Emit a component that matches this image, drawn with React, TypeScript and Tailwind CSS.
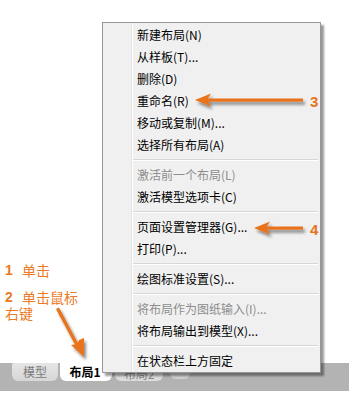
const font = { fontFamily: '"Noto Sans CJK SC", "Liberation Sans", sans-serif' };

type Row = { label: string; disabled?: boolean } | "sep";

const rows: Row[] = [
  { label: "新建布局(N)" },
  { label: "从样板(T)..." },
  { label: "删除(D)" },
  { label: "重命名(R)" },
  { label: "移动或复制(M)..." },
  { label: "选择所有布局(A)" },
  "sep",
  { label: "激活前一个布局(L)", disabled: true },
  { label: "激活模型选项卡(C)" },
  "sep",
  { label: "页面设置管理器(G)..." },
  { label: "打印(P)..." },
  "sep",
  { label: "绘图标准设置(S)..." },
  "sep",
  { label: "将布局作为图纸输入(I)...", disabled: true },
  { label: "将布局输出到模型(X)..." },
  "sep",
  { label: "在状态栏上方固定" },
];

function ContextMenu() {
  return (
    <div className="absolute left-[102px] top-[22px] w-[219px] border border-[#979797] bg-[#f0f0f0] pt-[1px] shadow-[3px_3px_2px_rgba(0,0,0,0.4)]">
      <div className="ml-[28px] border-l border-[#e2e3e3] shadow-[inset_1px_0_0_#ffffff]">
        {rows.map((r, i) =>
          r === "sep" ? (
            <div key={i} className="flex h-[8px] items-center pl-[1px] pr-[2px]">
              <div className="w-full border-t border-b border-t-[#d7d7d7] border-b-white" />
            </div>
          ) : (
            <div
              key={i}
              className={`flex h-[22px] items-center pl-[5px] text-[12px] ${r.disabled ? "text-[#8d8d8d]" : "text-black"}`}
            >
              {r.label}
            </div>
          )
        )}
      </div>
    </div>
  );
}

function Arrows() {
  return (
    <svg className="pointer-events-none absolute left-0 top-0" width="349" height="404" viewBox="0 0 349 404">
      <defs>
        <filter id="sh" x="-20%" y="-50%" width="140%" height="200%">
          <feDropShadow dx="2" dy="3" stdDeviation="1.5" floodColor="#000" floodOpacity="0.45" />
        </filter>
      </defs>
      <g fill="#e8731a" stroke="none" filter="url(#sh)">
        {/* arrow 3 */}
        <rect x="206" y="98.5" width="97" height="3.2" />
        <polygon points="195,100 211,93.5 207,100 211,106.5" />
        {/* arrow 4 */}
        <rect x="265" y="226.5" width="38" height="3.2" />
        <polygon points="254,228 270,221.5 266,228 270,234.5" />
        {/* diagonal arrow */}
        <polygon points="56,309 59,307.5 79,345 76,346.5" />
        <polygon points="84,357 71,345 77,344 79,340 84,338" />
      </g>
    </svg>
  );
}

export default function App() {
  return (
    <div className="relative h-[404px] w-[349px] overflow-hidden bg-white" style={font}>
      {/* annotations */}
      <div className="absolute left-[5px] top-[262px] text-[14px] leading-[16px] text-[#ea7a25]">
        <div className="flex items-center">
          <span className="w-[17px] font-bold" style={{ fontFamily: '"Liberation Sans", sans-serif' }}>1</span>
          <span>单击</span>
        </div>
        <div className="mt-[11px] flex items-center">
          <span className="w-[17px] font-bold" style={{ fontFamily: '"Liberation Sans", sans-serif' }}>2</span>
          <span>单击鼠标</span>
        </div>
        <div>右键</div>
      </div>

      {/* tab bar */}
      <div className="pt-[363px]">
        <div className="flex h-[28px] items-start bg-[#b3b3b3]">
          <div className="ml-[12px] flex h-[18px] w-[46px] items-center justify-center rounded-b-[6px] rounded-tl-[2px] bg-gradient-to-b from-[#e6e6e6] to-[#d6d6d6] text-[12px] text-[#7a7a7a]">
            模型
          </div>
          <div className="ml-[2px] flex h-[18px] w-[52px] items-center justify-center rounded-b-[6px] bg-white pr-[8px] pl-[6px] text-[12px] font-bold text-black">
            布局1
          </div>
          <div className="ml-[3px] flex h-[18px] w-[48px] items-end justify-center rounded-b-[6px] bg-[#dcdcdc] text-[12px] leading-[14px] text-[#888]">
            布局2
          </div>
          <div className="ml-[7px] h-[16px] w-[20px] rounded-b-[6px] bg-[#d0d0d0]" />
        </div>
      </div>

      <ContextMenu />

      <Arrows />

      <div
        className="absolute left-[310px] top-[91px] text-[15px] font-bold text-[#e8731a]"
        style={{ fontFamily: '"Liberation Sans", sans-serif' }}
      >
        3
      </div>
      <div
        className="absolute left-[310px] top-[219px] text-[15px] font-bold text-[#e8731a]"
        style={{ fontFamily: '"Liberation Sans", sans-serif' }}
      >
        4
      </div>
    </div>
  );
}
